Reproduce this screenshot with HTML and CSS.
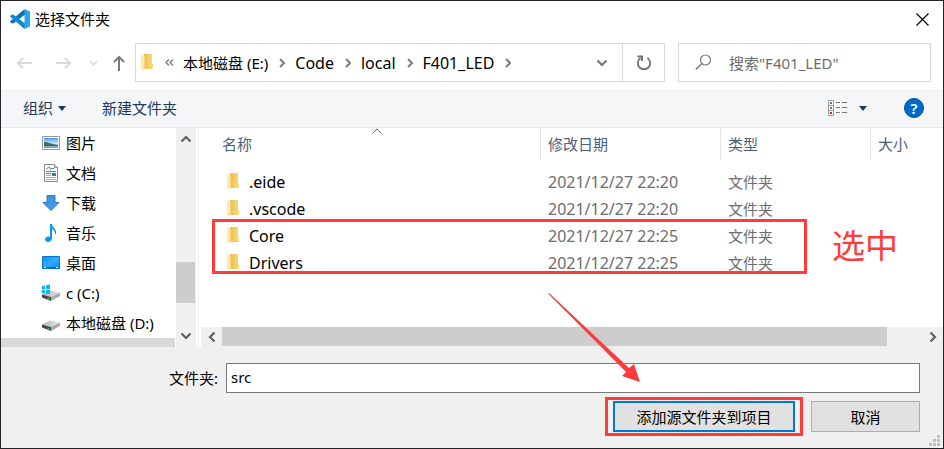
FILE: index.html
```html
<!DOCTYPE html>
<html lang="zh-CN">
<head>
<meta charset="utf-8">
<meta name="viewport" content="width=device-width, initial-scale=1">
<title>选择文件夹</title>
<link rel="stylesheet" href="styles.css">
</head>
<body>
<svg class="defs" aria-hidden="true">
  <defs>
    <linearGradient id="folder-back" x1="0" x2="1" y1="0" y2="0"><stop offset="0" stop-color="#e9bd52"/><stop offset="1" stop-color="#fadc80"/></linearGradient>
    <linearGradient id="drive-top" x1="0" x2="1" y1="0" y2="0"><stop offset="0" stop-color="#b5b5b5"/><stop offset="1" stop-color="#e6e6e6"/></linearGradient>
    <linearGradient id="sky" x1="0" x2="0" y1="0" y2="1"><stop offset="0" stop-color="#4f9be8"/><stop offset="0.6" stop-color="#d8effa"/><stop offset="1" stop-color="#6fa3b8"/></linearGradient>
    <linearGradient id="screen" x1="0" x2="1" y1="0" y2="1"><stop offset="0" stop-color="#1590f5"/><stop offset="0.5" stop-color="#35a8ff"/><stop offset="1" stop-color="#0c8cf0"/></linearGradient>
    <symbol id="folder" viewBox="0 0 12 17">
      <path d="M3 0h8v10h1v5H3z" fill="url(#folder-back)"/>
      <path d="M0 0l3.500 2.500V14.500L3 17 0 15z" fill="#ffe9a6"/>
    </symbol>
    <symbol id="drive" viewBox="0 0 18 11">
      <path d="M0 4.500L8 .500l10 2L9 7z" fill="url(#drive-top)"/>
      <path d="M0 4.500L9 7v4L0 7.500z" fill="#454545"/>
      <path d="M9 7l9-4.500V6L9 11z" fill="#a9a9a9"/>
      <path d="M5.500 7.500l2 .500v1.500l-2-.500z" fill="#34d043"/>
    </symbol>
    <symbol id="crumb" viewBox="0 0 6 10"><path d="M1 1l4 4-4 4" fill="none" stroke="#7d7d7d" stroke-width="2"/></symbol>
    <symbol id="chevron" viewBox="0 0 12 8"><path d="M1.500 1.500L6 6l4.500-4.500" fill="none" stroke="currentColor" stroke-width="2.200"/></symbol>
  </defs>
</svg>
<main class="dialog">
  <header class="titlebar">
    <svg class="logo" viewBox="0 0 20 20" aria-hidden="true">
      <path d="M14.500 0L20 2.500v15L14.500 20z" fill="#29a5f0"/>
      <path d="M14.500 0L0 12.500l1.500 2L4 14 15 5.500z" fill="#0873bd"/>
      <path d="M14.500 20L0 7.500l1.500-2L4 6l11 8.500z" fill="#0b8ad6"/>
    </svg>
    <h1 class="title">选择文件夹</h1>
    <button class="plain close" aria-label="关闭"><svg width="13" height="13" viewBox="0 0 13 13"><path d="M.500.500l12 12M12.500.500l-12 12" stroke="#000" stroke-width="1.200"/></svg></button>
  </header>

  <nav class="navbar">
    <div class="history">
      <button class="plain" aria-label="后退"><svg width="16" height="12" viewBox="0 0 16 12"><path d="M16 6H2M7 1L2 6l5 5" fill="none" stroke="#d9d9d9" stroke-width="2"/></svg></button>
      <button class="plain forward" aria-label="前进"><svg width="16" height="12" viewBox="0 0 16 12"><path d="M0 6h14M9 1l5 5-5 5" fill="none" stroke="#d9d9d9" stroke-width="2"/></svg></button>
      <button class="plain recent" aria-label="最近位置"><svg width="9" height="6" viewBox="0 0 12 8"><use href="#chevron"/></svg></button>
      <button class="plain" aria-label="上移"><svg width="12" height="16" viewBox="0 0 12 16"><path d="M6 16V2M1 7l5-5 5 5" fill="none" stroke="#7a7a7a" stroke-width="2"/></svg></button>
    </div>
    <div class="address">
      <svg class="folder" aria-hidden="true"><use href="#folder"/></svg>
      <svg class="more" width="9" height="7" viewBox="0 0 9 7" aria-hidden="true"><path d="M4 .500l-3 3 3 3M8 .500l-3 3 3 3" fill="none" stroke="#777" stroke-width="1.300"/></svg>
      <a href="#e">本地磁盘 (E:)</a>
      <svg class="crumb" aria-hidden="true"><use href="#crumb"/></svg>
      <a class="latin" href="#code">Code</a>
      <svg class="crumb" aria-hidden="true"><use href="#crumb"/></svg>
      <a class="latin" href="#local">local</a>
      <svg class="crumb" aria-hidden="true"><use href="#crumb"/></svg>
      <a class="latin" href="#led">F401_LED</a>
      <svg class="crumb" aria-hidden="true"><use href="#crumb"/></svg>
      <button class="plain drop" aria-label="历史位置"><svg width="12" height="8"><use href="#chevron"/></svg></button>
      <button class="plain refresh" aria-label="刷新"><svg width="16" height="16" viewBox="0 0 16 16"><path d="M11.500 3A6.200 6.200 0 1 1 4.500 3" fill="none" stroke="#777" stroke-width="2"/><path d="M1.500 1.500H6V6" fill="none" stroke="#777" stroke-width="2"/></svg></button>
    </div>
    <label class="search">
      <svg width="17" height="17" viewBox="0 0 17 17" aria-hidden="true"><circle cx="10.500" cy="6" r="5" fill="none" stroke="#777" stroke-width="1.200"/><path d="M7 9.500L.800 15.500" stroke="#777" stroke-width="1.400"/></svg>
      <input type="search" placeholder='搜索"F401_LED"' aria-label="搜索">
    </label>
  </nav>

  <div class="toolbar">
    <button class="plain">组织<i class="caret"></i></button>
    <button class="plain create">新建文件夹</button>
    <button class="plain view" aria-label="更改视图"><svg width="19" height="16" viewBox="0 0 19 16"><path d="M.500.500h5v15h-5zM.500 5.500h5M.500 10.500h5" fill="#fff" stroke="#999"/><path d="M8 2.500h4m2 0h5M8 7.500h4m2 0h5M8 12.500h4m2 0h5" stroke="#777"/><path d="M2 2h2v2H2z" fill="#3b79c4"/><path d="M2 7h2v2H2z" fill="#80813a"/><path d="M2 12h2v2H2z" fill="#c02f20"/></svg><i class="caret"></i></button>
    <button class="plain help" aria-label="帮助">?</button>
  </div>

  <div class="content">
    <aside class="sidebar">
      <ul class="places">
        <li><svg viewBox="0 0 18 18" aria-hidden="true"><path d="M.500 2.500h17v13H.500z" fill="#fff" stroke="#999"/><path d="M2 4h14v10H2z" fill="url(#sky)"/><path d="M2 8c4 0 7 2 14 3v1H2z" fill="#40705c"/><path d="M2 12h14v2H2z" fill="#7ba9ca"/></svg>图片</li>
        <li><svg viewBox="0 0 18 18" aria-hidden="true"><path d="M2.500.500h10l3 3v14h-13z" fill="#fff" stroke="#888"/><path d="M12.500.500v3h3" fill="#ddd" stroke="#888"/><path d="M4.500 5.500L6.500 3h1l1 3M9 4.500h3M4 7.500h10M4 9.500h5" fill="none" stroke="#1d96d5"/><path d="M10 9h4v3h-4z" fill="#3977b5"/><path d="M4 11.500h5M4 13.500h10M4 15.500h10" stroke="#aaa"/></svg>文档</li>
        <li><svg viewBox="0 0 18 18" aria-hidden="true"><path d="M5 1.500h8v7h4L9 16.500 1 8.500h4z" fill="#3f98e4" stroke="#2c79c2"/></svg>下载</li>
        <li><svg viewBox="0 0 18 18" aria-hidden="true"><path d="M8 0h2c0 4 5 4 4 10h-1c0-3-1-4-3-5v9c0 5-7 5-7 1.500C3 13 6 12 8 13z" fill="#0a98f7"/></svg>音乐</li>
        <li><svg viewBox="0 0 18 18" aria-hidden="true"><path d="M.500 2.500h17v12H.500z" fill="url(#screen)" stroke="#0876c9"/><path d="M1 13h16v1H1z" fill="#075ba5"/><path d="M2 13.500h2m10 0h2" stroke="#fff"/></svg>桌面</li>
        <li><svg viewBox="0 0 18 18" aria-hidden="true"><use href="#drive" y="6" width="18" height="11"/><path d="M0 2l3-.500v3.500H0zm4-.700L8 .500V5H4zM0 6h3v3.500L0 9zm4 0h4v4l-4-.500z" fill="#12b5e8"/></svg>c (C:)</li>
        <li><svg viewBox="0 0 18 18" aria-hidden="true"><use href="#drive" y="6" width="18" height="11"/></svg>本地磁盘 (D:)</li>
      </ul>
      <div class="side-track"></div>
    </aside>
    <div class="vscroll">
      <button class="plain" aria-label="向上滚动"><svg class="up" width="12" height="8"><use href="#chevron"/></svg></button>
      <div class="vthumb"></div>
      <button class="plain" aria-label="向下滚动"><svg width="12" height="8"><use href="#chevron"/></svg></button>
    </div>
    <section class="files">
      <table>
        <colgroup><col class="c-name"><col class="c-date"><col class="c-type"><col></colgroup>
        <thead>
          <tr><th>名称<svg class="sort" viewBox="0 0 10 6" aria-hidden="true"><path d="M.500 5.500L5 1l4.500 4.500" fill="none" stroke="#666"/></svg></th><th>修改日期</th><th>类型</th><th>大小</th></tr>
        </thead>
        <tbody>
          <tr><td><span class="name latin"><svg class="folder" aria-hidden="true"><use href="#folder"/></svg>.eide</span></td><td class="latin">2021/12/27 22:20</td><td>文件夹</td><td></td></tr>
          <tr><td><span class="name latin"><svg class="folder" aria-hidden="true"><use href="#folder"/></svg>.vscode</span></td><td class="latin">2021/12/27 22:20</td><td>文件夹</td><td></td></tr>
          <tr><td><span class="name latin"><svg class="folder" aria-hidden="true"><use href="#folder"/></svg>Core</span></td><td class="latin">2021/12/27 22:25</td><td>文件夹</td><td></td></tr>
          <tr><td><span class="name latin"><svg class="folder" aria-hidden="true"><use href="#folder"/></svg>Drivers</span></td><td class="latin">2021/12/27 22:25</td><td>文件夹</td><td></td></tr>
        </tbody>
      </table>
      <div class="mark"></div>
      <div class="note">选中</div>
      <div class="hscroll">
        <button class="plain" aria-label="向左滚动"><svg class="left" width="12" height="8"><use href="#chevron"/></svg></button>
        <div class="htrack"><div class="hthumb"></div></div>
        <button class="plain" aria-label="向右滚动"><svg class="right" width="12" height="8"><use href="#chevron"/></svg></button>
      </div>
    </section>
  </div>

  <form class="footer">
    <div class="field">
      <label for="folder-name">文件夹:</label>
      <input id="folder-name" type="text" value="src">
    </div>
    <div class="actions">
      <div class="primary-mark">
        <button type="button" class="btn primary">添加源文件夹到项目</button>
        <svg class="arrow" viewBox="0 0 92 89" aria-hidden="true"><path d="M0 0.500L1 0 81 75l5-4 6 18-18-6 4-4z" fill="#ff3b3b"/></svg>
      </div>
      <button type="button" class="btn">取消</button>
    </div>
    <svg class="grip" viewBox="0 0 11 11" aria-hidden="true"><path d="M8 0h3v3H8zM4 4h3v3H4zM8 4h3v3H8zM0 8h3v3H0zM4 8h3v3H4zM8 8h3v3H8z" fill="#bfbfbf"/></svg>
  </form>
</main>
</body>
</html>
```
FILE: styles.css
```css
* { box-sizing: border-box; }

body {
  margin: 0;
  background: #fff;
  color: #000;
  font: 15px/20px "Noto Sans", "Noto Sans CJK SC", sans-serif;
}

svg { display: block; flex: none; }
.defs { position: absolute; width: 0; height: 0; }

button, input { font: inherit; color: inherit; }

.latin { font-size: 16px; }

.plain {
  display: flex;
  align-items: center;
  justify-content: center;
  padding: 0;
  border: 0;
  background: none;
}

.dialog {
  display: flex;
  flex-direction: column;
  min-height: 100vh;
  border: 1px solid #24222a;
}

/* Title bar */
.titlebar {
  display: flex;
  align-items: center;
  height: 36px;
  padding: 0 14px 0 9px;
}
.logo { width: 20px; height: 20px; }
.title { flex: 1; margin: 0 0 0 5px; font-size: 15px; font-weight: 400; }

/* Navigation */
.navbar { display: flex; padding: 6px 12px 7px 15px; }
.history { display: flex; align-items: center; width: 119px; }
.history .forward { margin-left: 24px; }
.history .recent { margin: 0 15px 0 17px; color: #d9d9d9; }
.address {
  display: flex;
  flex: 1;
  align-items: center;
  height: 39px;
  padding-left: 5px;
  border: 1px solid #d9d9d9;
}
.address a { color: inherit; text-decoration: none; white-space: nowrap; }
.folder { width: 12px; height: 17px; }
.more { margin: 0 9px 0 12px; }
.crumb { width: 6px; height: 10px; margin: 0 10px 0 11px; }
.drop { margin-left: auto; width: 40px; height: 100%; color: #777; }
.refresh { width: 42px; height: 100%; border-left: 1px solid #d9d9d9; }
.search {
  display: flex;
  flex: 0 1 253px;
  align-items: center;
  gap: 17px;
  min-width: 0;
  margin-left: 13px;
  padding-left: 16px;
  border: 1px solid #d9d9d9;
}
.search input { flex: 1; width: 100%; min-width: 0; padding: 0; border: 0; outline: 0; background: none; }
.search input::placeholder { color: #6d6d6d; opacity: 1; }

/* Toolbar */
.toolbar {
  display: flex;
  align-items: center;
  height: 39px;
  padding: 0 19px 0 22px;
  border-bottom: 1px solid #e5e7ea;
  background: #f5f6f7;
  color: #1e395b;
}
.caret {
  margin-left: 5px;
  border: solid transparent;
  border-width: 5px 4px 0;
  border-top-color: #1e395b;
}
.create { margin-left: 36px; }
.view { margin-left: auto; }
.view .caret { margin-left: 12px; }
.help {
  width: 20px;
  height: 20px;
  margin-left: 37px;
  border: 1px solid #0a4f94;
  border-radius: 50%;
  background: #0069ca;
  color: #fff;
  font-weight: 600;
}

/* Places list and its scrollbar */
.content { display: flex; flex: 1; }
.sidebar { display: flex; flex-direction: column; flex: none; width: 174px; }
.places { flex: 1; margin: 0; padding: 0 0 0 41px; list-style: none; }
.places li { display: flex; align-items: center; gap: 6px; height: 30px; white-space: nowrap; }
.places svg { width: 18px; height: 18px; }
.side-track { height: 9px; background: #d9d9d9; }
.vscroll {
  display: flex;
  flex-direction: column;
  width: 20px;
  margin-left: 1px;
  background: #f0f0f0;
  color: #606060;
}
.vscroll .plain { height: 22px; }
.vthumb { height: 41px; margin: auto 1px 22px 0; background: #cdcdcd; }
.up { transform: rotate(180deg); }
.left { transform: rotate(90deg); }
.right { transform: rotate(-90deg); }

/* File list */
.files {
  position: relative;
  display: flex;
  flex: 1;
  flex-direction: column;
  min-width: 0;
  margin-left: 2px;
  border-left: 1px solid #f0f0f0;
}
table { width: auto; margin-left: 15px; border-collapse: separate; border-spacing: 0; table-layout: fixed; }
.c-name { width: 327px; }
.c-date { width: 180px; }
.c-type { width: 150px; }
th {
  position: relative;
  height: 32px;
  padding: 0 7px;
  border-right: 1px solid #e5e5e5;
  color: #4c607a;
  font-weight: 400;
  text-align: left;
}
th:first-child { padding-left: 8px; }
th:last-child { border-right: 0; }
.sort { position: absolute; top: 0; left: 50%; width: 10px; height: 6px; margin-left: -5px; }
tbody::before { display: block; height: 8px; content: ""; }
td { height: 27px; padding: 0 7px; color: #6d6d6d; }
td:first-child { padding-left: 13px; color: #000; }
.name { display: flex; align-items: center; gap: 10px; }
.mark {
  position: absolute;
  top: 91px;
  left: 13px;
  width: 595px;
  height: 55px;
  border: 3px solid #ff3b3b;
}
.note {
  position: absolute;
  top: 98px;
  left: 633px;
  color: #ff3b3b;
  font-size: 33px;
  line-height: 40px;
}
.hscroll {
  display: flex;
  height: 20px;
  margin-top: auto;
  margin-left: 2px;
  border-bottom: 1px solid #f0f0f0;
  background: #f0f0f0;
  color: #606060;
}
.hscroll .plain { width: 21px; }
.htrack { flex: 1; }
.hthumb { width: 95%; height: 100%; background: #cdcdcd; }

/* Footer */
.footer { position: relative; padding: 16px 23px 12px; background: #f0f0f0; }
.field { display: flex; align-items: center; gap: 8px; padding-left: 145px; }
.field input {
  flex: 1;
  min-width: 0;
  height: 30px;
  padding: 0 4px 2px;
  border: 1px solid #7a7a7a;
  outline: 0;
  background: #fff;
}
.actions { display: flex; align-items: center; justify-content: flex-end; gap: 8px; margin-top: 4px; }
.primary-mark { position: relative; padding: 1px 5px; border: 3px solid #ff3b3b; }
.btn {
  min-width: 109px;
  height: 31px;
  padding: 0;
  border: 1px solid #adadad;
  background: #e1e1e1;
}
.btn.primary { min-width: 182px; border: 2px solid #0078d7; }
.arrow { position: absolute; right: 160px; bottom: 51px; width: 92px; height: 89px; }
.grip { position: absolute; right: 3px; bottom: 2px; width: 11px; height: 11px; }
```
